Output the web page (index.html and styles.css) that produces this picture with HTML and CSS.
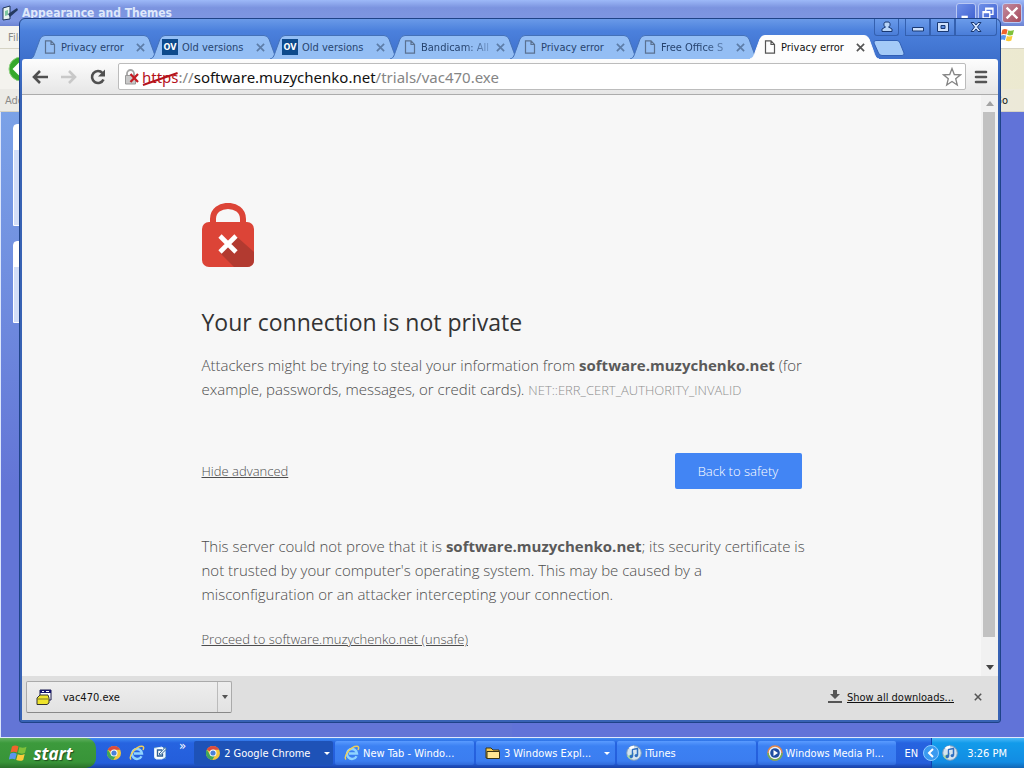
FILE: index.html
```html
<!DOCTYPE html>
<html lang="en">
<head>
<meta charset="utf-8">
<title>Privacy error</title>
<link rel="stylesheet" href="styles.css">
</head>
<body>
<svg class="defs" aria-hidden="true">
  <symbol id="tab-shape" viewBox="0 0 129 24" preserveAspectRatio="none">
    <path d="M0 24 C4 23 4 20 6 15 L10 4 Q11.500 .5 15 .5 H114 Q117.500 .5 119 4 L123 15 C125 20 125 23 129 24" stroke-width="1"/>
  </symbol>
  <symbol id="page-icon" viewBox="0 0 12 14">
    <path d="M1.500 .8H7L10.500 4.500V13.200H1.500Z M7 .8V4.500H10.500" fill="none" stroke="currentColor" stroke-width="1.200"/>
  </symbol>
  <symbol id="cross" viewBox="0 0 10 10">
    <path d="M1 1L9 9M9 1L1 9" fill="none" stroke="currentColor" stroke-width="1.900"/>
  </symbol>
  <symbol id="chrome-logo" viewBox="0 0 16 16">
    <circle cx="8" cy="8" r="7" fill="#f3c63c"/>
    <path d="M8 8L1.800 4.700A7 7 0 0 1 14.200 4.800H8Z" fill="#dc4b3e"/>
    <path d="M1.800 4.700A7 7 0 0 0 7.300 15L10.500 9.500 5 9.500Z" fill="#3fa65a"/>
    <circle cx="8" cy="8" r="3.500" fill="#fff"/><circle cx="8" cy="8" r="2.600" fill="#4a80d8"/>
  </symbol>
  <symbol id="ie-logo" viewBox="0 0 16 16">
    <path d="M12.500 11.200A5 5 0 1 1 13 8.500H5" fill="none" stroke="#8fd4ff" stroke-width="2.400"/>
    <path d="M2 14.500C-1 11 7 1 13 1.200C15 1.400 15 3 14 5" fill="none" stroke="#f0cf59" stroke-width="1.400"/>
  </symbol>
  <symbol id="flag" viewBox="0 0 20 18">
    <path d="M3 2.500C5.500 1 7.500 1.500 9.500 2.500L8 8.500C6 7.500 4 7.200 1.500 8.500Z" fill="#f0642c"/>
    <path d="M10.500 3C12.500 4 15 4 17.500 2.800L16 8.800C13.500 10 11.500 9.800 9 8.800Z" fill="#7fc13a"/>
    <path d="M1.200 9.700C3.500 8.500 5.600 8.700 7.700 9.700L6.200 15.500C4 14.500 2 14.500-.2 15.700Z" fill="#5b95ee"/>
    <path d="M8.700 10.200C11 11.300 13.300 11.200 15.700 10L14.200 16C12 17.200 9.500 17 7.200 16Z" fill="#fbcb3a"/>
  </symbol>
  <symbol id="itunes-logo" viewBox="0 0 16 16">
    <circle cx="8" cy="8" r="7.300" fill="#d5e4f0" stroke="#7f9dbc"/>
    <path d="M8 8L3 2.500A7 7 0 0 1 8 .8Z" fill="#fff"/><path d="M8 8L1 11A7 7 0 0 0 5 14.500Z" fill="#a7d9a8"/>
    <path d="M6.500 11.500V4.500L11.500 3.500V10.500" fill="none" stroke="#2f6fc0" stroke-width="1.500"/>
    <circle cx="5.300" cy="11.500" r="1.700" fill="#2f6fc0"/><circle cx="10.300" cy="10.600" r="1.700" fill="#2f6fc0"/>
  </symbol>
</svg>

<main class="desktop">
  <section class="explorer" aria-label="Appearance and Themes">
    <header class="explorer-title">
      <svg class="icon16" viewBox="0 0 16 16"><path d="M1 3L8 1V14L1 15Z" fill="#e8f4f0" stroke="#1d3458"/><path d="M3 6L6 5V10L3 11Z" fill="#7cc7a0"/><path d="M6 9L15 3L16 5L8 12Z" fill="#24395f"/></svg>
      <h2>Appearance and Themes</h2>
      <div class="explorer-buttons">
        <button aria-label="Minimize"><svg viewBox="0 0 20 20"><path d="M5 13H12V16H5Z" fill="#fff"/></svg></button>
        <button aria-label="Restore"><svg viewBox="0 0 20 20"><path d="M7.500 8V4.500H15.500V11.500H12M7.500 5.500H15.500M4.500 8.500H12V15.500H4.500ZM4.500 9.500H12" fill="none" stroke="#fff" stroke-width="1.500"/></svg></button>
        <button class="red" aria-label="Close"><svg viewBox="0 0 20 20"><path d="M4 4L16 16M16 4L4 16" stroke="#fff" stroke-width="2.600"/></svg></button>
      </div>
    </header>
    <nav class="explorer-menu"><span>File</span><span class="throbber"><svg viewBox="0 0 20 18"><use href="#flag"/></svg></span></nav>
    <div class="explorer-tools"><svg viewBox="0 0 26 26"><circle cx="13" cy="13" r="12" fill="#35a82c" stroke="#8fd080"/><path d="M14 6L7 13L14 20M7 13H20" fill="none" stroke="#fff" stroke-width="3.500"/></svg></div>
    <div class="explorer-address"><span>Address</span><span class="go">Go</span></div>
    <div class="explorer-body"><div class="pane tall"></div><div class="pane"></div></div>
  </section>

  <section class="browser" aria-label="Google Chrome">
    <header class="tabstrip">
      <div class="tab"><svg class="shape"><use href="#tab-shape"/></svg><svg class="favicon"><use href="#page-icon"/></svg><span class="tab-title">Privacy error</span><button aria-label="Close tab"><svg><use href="#cross"/></svg></button></div>
      <div class="tab"><svg class="shape"><use href="#tab-shape"/></svg><b class="ov">OV</b><span class="tab-title">Old versions</span><button aria-label="Close tab"><svg><use href="#cross"/></svg></button></div>
      <div class="tab"><svg class="shape"><use href="#tab-shape"/></svg><b class="ov">OV</b><span class="tab-title">Old versions</span><button aria-label="Close tab"><svg><use href="#cross"/></svg></button></div>
      <div class="tab"><svg class="shape"><use href="#tab-shape"/></svg><svg class="favicon"><use href="#page-icon"/></svg><span class="tab-title fade">Bandicam: All</span><button aria-label="Close tab"><svg><use href="#cross"/></svg></button></div>
      <div class="tab"><svg class="shape"><use href="#tab-shape"/></svg><svg class="favicon"><use href="#page-icon"/></svg><span class="tab-title">Privacy error</span><button aria-label="Close tab"><svg><use href="#cross"/></svg></button></div>
      <div class="tab"><svg class="shape"><use href="#tab-shape"/></svg><svg class="favicon"><use href="#page-icon"/></svg><span class="tab-title fade">Free Office S</span><button aria-label="Close tab"><svg><use href="#cross"/></svg></button></div>
      <div class="tab active"><svg class="shape"><use href="#tab-shape"/></svg><svg class="favicon"><use href="#page-icon"/></svg><span class="tab-title">Privacy error</span><button aria-label="Close tab"><svg><use href="#cross"/></svg></button></div>
      <button class="new-tab" aria-label="New tab"><svg viewBox="0 0 32 16"><path d="M3 .5H24Q26 .5 27 3L31 13Q31.500 15.500 29 15.500H9Q6.500 15.500 5.500 13L1 3Q.5 .5 3 .5Z" fill="#a4caf7" stroke="#315fb5"/></svg></button>
      <div class="controls">
        <button class="user" aria-label="User"><svg viewBox="0 0 12 12"><path d="M6 1A2.300 2.500 0 0 1 7.500 6L11 8V10.500H1V8L4.500 6A2.300 2.500 0 0 1 6 1Z" fill="#b9d5f8" stroke="#193872"/></svg></button>
        <button aria-label="Minimize"><svg viewBox="0 0 12 12"><path d="M.5 6.500H11.500V10H.5Z" fill="#cfe1fb" stroke="#193872"/></svg></button>
        <button aria-label="Maximize"><svg viewBox="0 0 12 12"><path d="M.5 1.500H11.500V10.500H.5ZM4 4.500V7.500H8V4.500Z" fill="#cfe1fb" stroke="#193872" fill-rule="evenodd"/></svg></button>
        <button class="wide" aria-label="Close"><svg viewBox="0 0 12 12"><path d="M1 1.500H4L6 4L8 1.500H11L7.500 6L11 10.500H8L6 8L4 10.500H1L4.500 6Z" fill="#cfe1fb" stroke="#193872"/></svg></button>
      </div>
    </header>
    <div class="toolbar">
      <button aria-label="Back"><svg viewBox="0 0 18 16"><path d="M9 2L3 8L9 14M3 8H17" fill="none" stroke="#505050" stroke-width="2.600"/></svg></button>
      <button aria-label="Forward" disabled><svg viewBox="0 0 18 16"><path d="M9 2L15 8L9 14M15 8H1" fill="none" stroke="#c8c8c8" stroke-width="2.600"/></svg></button>
      <button aria-label="Reload"><svg viewBox="0 0 18 16"><path d="M13.500 4A6 6 0 1 0 14.500 10.500" fill="none" stroke="#505050" stroke-width="2.600"/><path d="M16 .5V7.500H9Z" fill="#505050"/></svg></button>
      <div class="omnibox">
        <svg class="badlock" viewBox="0 0 16 16"><path d="M3 7V4.500A3.500 3.500 0 0 1 10 4.500V7" fill="none" stroke="#a5a5a5" stroke-width="1.800"/><path d="M1.500 6.500H11.500V15H1.500Z" fill="#c9c9c9" stroke="#999"/><path d="M6.500 5L14 13M14 5L6.500 13" stroke="#c51d24" stroke-width="2.200"/></svg>
        <div class="url" role="textbox" contenteditable="true" spellcheck="false" aria-label="Address and search bar"><span class="scheme">https<svg viewBox="0 0 38 16" preserveAspectRatio="none"><path d="M1 14L37 2" stroke="#b5121b" stroke-width="2"/></svg></span><span class="dim">://</span>software.muzychenko.net<span class="dim">/trials/vac470.exe</span></div>
        <button class="star" aria-label="Bookmark"><svg viewBox="0 0 20 20"><path d="M10 1.500L12.300 7.500L18.500 7.800L13.700 11.700L15.300 18L10 14.500L4.700 18L6.300 11.700L1.500 7.800L7.700 7.500Z" fill="#fff" stroke="#858585" stroke-width="1.300"/></svg></button>
      </div>
      <button class="menu" aria-label="Menu"><svg viewBox="0 0 14 14"><path d="M2 2H12M2 7H12M2 12H12" stroke="#555" stroke-width="2.600" stroke-linecap="round"/></svg></button>
    </div>
    <div class="viewport">
      <div class="page">
        <article>
          <svg class="lock" viewBox="0 0 52 64">
            <path d="M11 21V16C11 -1.500 41 -1.500 41 16V21" fill="none" stroke="#dc4437" stroke-width="6"/>
            <rect y="19" width="52" height="45" rx="7" fill="#dc4437"/>
            <path d="M34 33L52 49V57Q52 64 45 64H32L18 50Z" fill="#b23a30"/>
            <path d="M18 33L34 49M34 33L18 49" stroke="#fff" stroke-width="4.600"/>
          </svg>
          <h1>Your connection is not private</h1>
          <p>Attackers might be trying to steal your information from <strong>software.muzychenko.net</strong> (for example, passwords, messages, or credit cards). <span class="code">NET::ERR_CERT_AUTHORITY_INVALID</span></p>
          <div class="actions"><a href="#details">Hide advanced</a><button>Back to safety</button></div>
          <p id="details">This server could not prove that it is <strong>software.muzychenko.net</strong>; its security certificate is not trusted by your computer's operating system. This may be caused by a misconfiguration or an attacker intercepting your connection.</p>
          <p class="proceed"><a href="#proceed">Proceed to software.muzychenko.net (unsafe)</a></p>
        </article>
      </div>
      <div class="scrollbar">
        <button aria-label="Scroll up"><svg viewBox="0 0 8 5"><path d="M0 5L4 0L8 5Z" fill="#a3a3a3"/></svg></button>
        <div class="thumb"></div>
        <button aria-label="Scroll down"><svg viewBox="0 0 8 5"><path d="M0 0L4 5L8 0Z" fill="#444"/></svg></button>
      </div>
    </div>
    <footer class="shelf">
      <div class="download">
        <button class="file"><svg class="icon16" viewBox="0 0 16 16"><path d="M4 1H15V11H4Z" fill="#fff" stroke="#17174c"/><path d="M4 1H15V4H4Z" fill="#17176e"/><path d="M6 2.500H8M10 2.500H13" stroke="#fff"/><path d="M1 9L4 6H12L13 9V14L11 15.500H1Z" fill="#eee32c" stroke="#333"/><path d="M1 10H12" stroke="#77752d"/></svg>vac470.exe</button>
        <button class="drop" aria-label="Download options"><svg viewBox="0 0 6 4"><path d="M0 0H6L3 4Z" fill="#555"/></svg></button>
      </div>
      <div class="shelf-right">
        <svg class="arrow" viewBox="0 0 14 14"><path d="M5 0H9V4H12L7 9L2 4H5ZM0 11H14V13H0Z" fill="#555"/></svg>
        <a href="#downloads">Show all downloads...</a>
        <button aria-label="Close downloads"><svg><use href="#cross"/></svg></button>
      </div>
    </footer>
  </section>
</main>

<footer class="taskbar">
  <button class="start"><svg viewBox="0 0 20 18"><use href="#flag"/></svg>start</button>
  <div class="quick">
    <button aria-label="Chrome"><svg viewBox="0 0 16 16"><use href="#chrome-logo"/></svg></button>
    <button aria-label="Internet Explorer"><svg viewBox="0 0 16 16"><use href="#ie-logo"/></svg></button>
    <button aria-label="Show desktop"><svg viewBox="0 0 16 16"><path d="M2 2H14V14H2Z" fill="#4b83c1"/><path d="M2.500 3.500L10 2L13 5V12L10 14H4L2.500 12Z" fill="#fff" stroke="#d5ecff"/><path d="M10 5H5.500V11H10.500V8.500" fill="none" stroke="#2c5f93" stroke-width="1.400"/><path d="M7 9L13 2.500L14.500 4L8.500 10Z" fill="#e9f6ff" stroke="#2c5f93"/></svg></button>
    <span class="more">»</span>
  </div>
  <div class="tasks">
    <button class="task pressed"><svg viewBox="0 0 16 16"><use href="#chrome-logo"/></svg><span>2 Google Chrome</span><i></i></button>
    <button class="task"><svg viewBox="0 0 16 16"><use href="#ie-logo"/></svg><span>New Tab - Windo...</span></button>
    <button class="task"><svg viewBox="0 0 16 16"><path d="M1 3H6L8 5H14V13H1Z" fill="#f4c94f" stroke="#3a3415"/><path d="M2 6.500H14.500V13.500H2Z" fill="#ffe693" stroke="#3a3415"/></svg><span>3 Windows Expl...</span><i></i></button>
    <button class="task"><svg viewBox="0 0 16 16"><use href="#itunes-logo"/></svg><span>iTunes</span></button>
    <button class="task"><svg viewBox="0 0 16 16"><circle cx="8" cy="8" r="7" fill="#eef4fa" stroke="#e3874a" stroke-width="1.500"/><path d="M1 8A7 7 0 0 0 15 8" fill="none" stroke="#6cae5a" stroke-width="1.500"/><circle cx="8" cy="8" r="4.800" fill="#1f4da0"/><path d="M6.500 5L11 8L6.500 11Z" fill="#fff"/></svg><span>Windows Media Pl...</span></button>
  </div>
  <span class="lang">EN</span>
  <div class="tray">
    <button class="expand" aria-label="Show hidden icons"><svg viewBox="0 0 16 16"><circle cx="8" cy="8" r="7.500" fill="#3a9af0" stroke="#8fcbff"/><path d="M10 4L6 8L10 12" fill="none" stroke="#fff" stroke-width="2"/></svg></button>
    <svg class="icon16" viewBox="0 0 16 16"><use href="#itunes-logo"/></svg>
    <time>3:26 PM</time>
  </div>
</footer>
</body>
</html>
```
FILE: styles.css
```css
* { box-sizing: border-box; }
body {
  margin: 0;
  height: 100vh;
  display: flex;
  flex-direction: column;
  overflow: hidden;
  font-family: "DejaVu Sans Condensed", "Noto Sans", sans-serif;
  font-size: 11px;
}
button {
  border: 0;
  padding: 0;
  background: none;
  font: inherit;
  color: inherit;
  display: flex;
  align-items: center;
  justify-content: center;
}
h1, h2, p { margin: 0; }
.defs { position: absolute; width: 0; height: 0; }
.icon16 { width: 16px; height: 16px; flex: none; }
.desktop { position: relative; flex: 1; min-height: 0; }

/* Explorer window behind the browser */
.explorer { height: 100%; display: flex; flex-direction: column; }
.explorer-title {
  height: 26px;
  flex: none;
  display: flex;
  align-items: center;
  gap: 4px;
  padding: 0 2px;
  background: linear-gradient(#9db9f8, #7b93df 30%, #7f97e2 80%, #6c83d2);
}
.explorer-title h2 { flex: 1; font-size: 12px; color: #dfe8fb; }
.explorer-buttons { display: flex; gap: 2px; }
.explorer-buttons button {
  width: 20px;
  height: 20px;
  border: 1px solid #b9c8f4;
  border-radius: 3px;
  background: linear-gradient(135deg, #6f8fe8, #3d5fd0);
}
.explorer-buttons .red { margin-left: 2px; background: linear-gradient(135deg, #c08aa0, #a84c5c); }
.explorer-buttons svg { width: 18px; height: 18px; }
.explorer-menu, .explorer-address {
  flex: none;
  display: flex;
  align-items: center;
  justify-content: space-between;
  color: #8a8a86;
  background: #f4f3ee;
  border-bottom: 1px solid #d6d3c4;
}
.explorer-menu { height: 23px; padding-left: 8px; }
.throbber { width: 24px; height: 22px; background: #fff; }
.throbber svg { width: 16px; height: 18px; }
.explorer-tools { height: 40px; flex: none; padding: 7px 8px; background: linear-gradient(90deg, #f4f3ee 50%, #ece9d0); }
.explorer-tools svg { width: 26px; height: 26px; }
.explorer-address { height: 23px; padding: 0 16px 0 5px; background: linear-gradient(90deg, #ecebe6 50%, #ece9d8); }
.explorer-address .go { color: #111; }
.explorer-body {
  flex: 1;
  display: flex;
  flex-direction: column;
  gap: 15px;
  padding: 12px;
  border-left: 1px solid #dce6fb;
  background: linear-gradient(90deg, transparent 50%, #6173d8 50%), linear-gradient(#7ba2e7, #6375d6 60%);
}
.pane { width: 180px; height: 82px; border: 1px solid #fff; border-radius: 4px 4px 0 0; background: linear-gradient(#fff 25px, #d3def8 25px); }
.pane.tall { height: 102px; }

/* Browser window */
.browser {
  position: absolute;
  inset: 18px 23px 14px 19px;
  display: flex;
  flex-direction: column;
  border: 1px solid #1f4388;
  border-radius: 6px 6px 3px 3px;
  padding: 0 2px 2px;
  background: linear-gradient(#6a9ae8, #4b80dc 12px, #3e70cc 40px, #3762b4 80px);
}
.tabstrip { flex: none; height: 40px; padding-left: 8px; display: flex; align-items: flex-end; }
.tab {
  position: relative;
  flex: 0 1 120px;
  min-width: 0;
  height: 24px;
  display: flex;
  align-items: center;
  padding: 0 3px 0 14px;
  color: #27446f;
}
.tab .shape {
  position: absolute;
  left: 0;
  top: 0;
  width: calc(100% + 9px);
  height: 24px;
  fill: #94bef4;
  stroke: #4471b8;
}
.favicon, .ov, .tab-title, .tab button { position: relative; }
.favicon { width: 12px; height: 14px; flex: none; color: #5a7191; }
.ov {
  flex: none;
  width: 16px;
  height: 16px;
  margin: 0 -2px;
  background: #0e4a8c;
  color: #fff;
  font-size: 9px;
  line-height: 16px;
  text-align: center;
}
.tab-title {
  flex: 1;
  min-width: 0;
  margin: 0 0 0 5px;
  white-space: nowrap;
}
.tab-title.fade { mask-image: linear-gradient(90deg, #000 60%, rgb(0 0 0 / 30%) 95%); }
.ov + .tab-title { margin-left: 6px; }
.tab button { width: 14px; height: 14px; flex: none; color: #5d7da8; }
.tab button svg { width: 9px; height: 9px; }
.tab.active { z-index: 1; color: #111; }
.tab.active .shape { fill: #fdfdfd; stroke: #fdfdfd; }
.tab.active .favicon, .tab.active button { color: #555; }
.new-tab { flex: none; width: 32px; height: 16px; margin: 0 0 3px 3px; }
.new-tab svg { width: 32px; height: 16px; }
.controls { position: absolute; top: 0; right: 3px; display: flex; }
.controls button { width: 25px; height: 17px; border: 1px solid #3460af; border-top: 0; background: linear-gradient(#6a9bea, #4a7dd8); }
.controls .user { margin-right: 6px; border-radius: 0 0 3px 3px; }
.controls .wide { width: 42px; border-radius: 0 0 3px 0; }
.controls svg { width: 12px; height: 12px; }
.toolbar {
  flex: none;
  height: 36px;
  display: flex;
  align-items: center;
  gap: 11px;
  padding: 0 9px;
  border-radius: 3px 3px 0 0;
  border-bottom: 1px solid #acacac;
  background: linear-gradient(#fdfdfd, #e6e6e6);
}
.toolbar > button svg { width: 18px; height: 16px; }
.omnibox {
  flex: 1;
  height: 27px;
  display: flex;
  align-items: center;
  padding: 0 3px 0 5px;
  border: 1px solid #bcbcbc;
  border-radius: 2px;
  background: #fff;
}
.badlock { width: 16px; height: 16px; flex: none; }
.url { flex: 1; margin-left: 2px; font-family: "Noto Sans", sans-serif; font-size: 15px; line-height: 24px; color: #111; white-space: nowrap; outline: 0; }
.scheme { position: relative; color: #b5121b; }
.scheme svg { position: absolute; left: 0; top: 4px; width: 100%; height: 16px; }
.dim { color: #858585; }
.star svg { width: 20px; height: 20px; display: block; }
.toolbar > .menu { margin: 0 1px 0 -3px; }
.toolbar > .menu svg { width: 14px; height: 14px; }
.viewport { flex: 1; min-height: 0; display: flex; background: #f7f7f7; }
.page {
  flex: 1;
  overflow: hidden;
  padding: 108px 24px 0;
  font-family: "Open Sans", "Noto Sans", sans-serif;
  font-weight: 300;
  font-size: 15px;
  line-height: 24px;
  color: #4c4c4c;
}
.page article { max-width: 600px; margin: 0 auto; }
.page p { margin-right: -12px; }
.lock { display: block; width: 52px; height: 64px; }
.page h1 { margin-top: 39px; margin-bottom: 15px; font-size: 23px; font-weight: 400; line-height: 32px; color: #333; }
.page strong { font-weight: 700; color: #5a5a5a; }
.code { font-size: 13px; line-height: 1; color: #8f8f8f; }
.actions { display: flex; align-items: center; justify-content: space-between; margin-top: 52px; margin-bottom: 45px; font-size: 13px; }
.actions button { width: 127px; height: 36px; border-radius: 2px; background: #4285f4; color: #fff; }
.page a { color: #4c4c4c; }
.page .proceed { margin-top: 21px; font-size: 13px; }
.scrollbar { flex: none; width: 17px; display: flex; flex-direction: column; background: #f1f1f1; }
.scrollbar button { flex: none; height: 17px; }
.scrollbar svg { width: 8px; height: 5px; }
.thumb { flex: 1; margin: 0 3px 22px 2px; background: #c1c1c1; }
.shelf { flex: none; height: 44px; display: flex; align-items: center; justify-content: space-between; padding: 0 16px 2px 4px; background: #dfdfdf; color: #111; }
.download { display: flex; width: 206px; height: 32px; border: 1px solid #aaa; border-bottom-color: #888; border-radius: 2px; background: linear-gradient(#eee, #e2e2e2); }
.file { flex: 1; justify-content: flex-start; gap: 11px; padding-left: 9px; }
.drop { width: 14px; border-left: 1px solid #bbb; }
.drop svg { width: 6px; height: 4px; }
.shelf-right { display: flex; align-items: center; gap: 5px; }
.shelf-right a { color: #111; }
.shelf-right button { margin-left: 15px; color: #555; }
.shelf-right button svg { width: 8px; height: 8px; }
.arrow { width: 14px; height: 14px; }

/* Taskbar */
.taskbar {
  flex: none;
  height: 31px;
  display: flex;
  align-items: stretch;
  border-top: 1px solid #dfe9fd;
  background: linear-gradient(#3f8cf3, #2663e0 5px, #245edb 25px, #1941a5);
  color: #fff;
}
.start {
  width: 96px;
  gap: 4px;
  padding-right: 14px;
  border-radius: 0 10px 10px 0;
  background: linear-gradient(#62b062, #3c9a3c 5px, #389438 24px, #2a702a);
  font: italic bold 17px "Open Sans", sans-serif;
  text-shadow: 1px 1px 1px #1d4d1d;
}
.start svg { width: 20px; height: 18px; }
.quick { display: flex; align-items: center; gap: 7px; padding: 0 8px 0 10px; }
.quick svg, .task svg { width: 16px; height: 16px; flex: none; }
.more { align-self: flex-start; font-size: 13px; margin-left: 4px; }
.tasks { flex: 1; display: flex; gap: 2px; padding: 3px 0; min-width: 0; }
.task {
  flex: 1 1 0;
  min-width: 0;
  justify-content: flex-start;
  gap: 3px;
  padding: 0 5px 0 9px;
  border-radius: 2px;
  background: linear-gradient(#5a9bff, #3c81f3 5px, #3b7df0 20px, #3069d8);
  white-space: nowrap;
}
.task span { flex: 1; text-align: left; }
.task i { border: 3px solid transparent; border-top-color: #fff; border-bottom: 0; }
.task.pressed { background: #1e52b7; padding: 0 3px 0 11px; }
.lang { align-self: center; padding: 0 13px 0 8px; }
.tray { display: flex; align-items: center; gap: 3px; padding-right: 17px; border-left: 1px solid #1042af; background: linear-gradient(#4bb8f8, #129bea 5px, #128ce3 24px, #1166b5); }
.expand { margin-left: -9px; }
.expand svg { width: 16px; height: 16px; }
.tray time { margin-left: 6px; }
```
